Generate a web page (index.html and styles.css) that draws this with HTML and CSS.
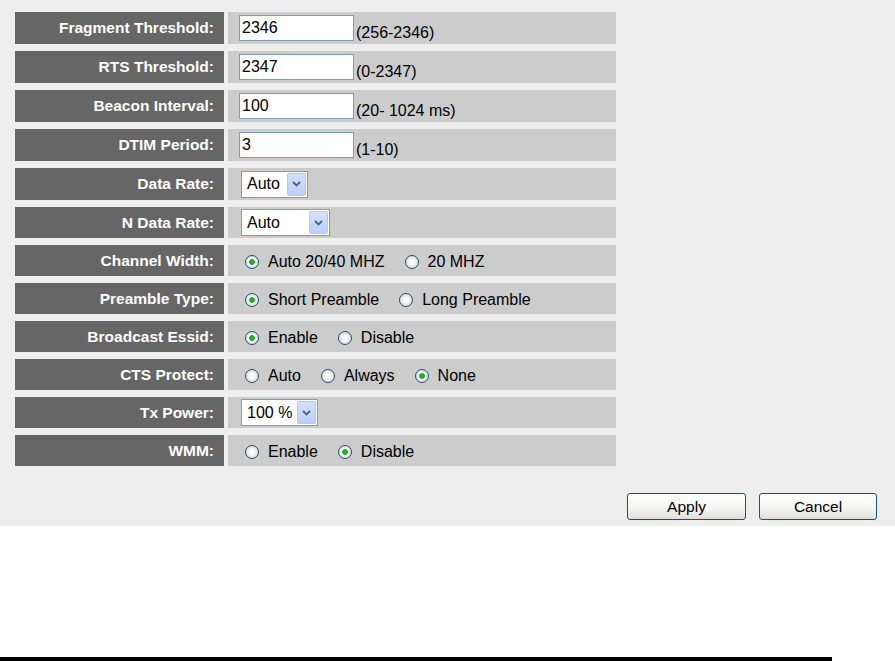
FILE: index.html
```html
<!DOCTYPE html>
<html lang="en">
<head>
    <meta charset="UTF-8">
    <title>Advanced Wireless Settings</title>
    <link rel="stylesheet" href="styles.css">
</head>
<body>
    <div class="page">
        <div class="settings">
            <div class="row tall">
                <div class="label">Fragment Threshold:</div>
                <div class="value"><input class="text-input" type="text" value="2346"><span class="hint">(256-2346)</span></div>
            </div>
            <div class="row tall">
                <div class="label">RTS Threshold:</div>
                <div class="value"><input class="text-input" type="text" value="2347"><span class="hint">(0-2347)</span></div>
            </div>
            <div class="row tall">
                <div class="label">Beacon Interval:</div>
                <div class="value"><input class="text-input" type="text" value="100"><span class="hint">(20- 1024 ms)</span></div>
            </div>
            <div class="row tall">
                <div class="label">DTIM Period:</div>
                <div class="value"><input class="text-input" type="text" value="3"><span class="hint">(1-10)</span></div>
            </div>
            <div class="row tall">
                <div class="label">Data Rate:</div>
                <div class="value">
                    <div class="select select-rate"><span class="select-text">Auto</span><span class="select-btn"><svg width="9" height="6" viewBox="0 0 9 6"><path d="M1 1 L4.5 4.5 L8 1" fill="none" stroke="#4d6185" stroke-width="1.8"/></svg></span></div>
                </div>
            </div>
            <div class="row">
                <div class="label">N Data Rate:</div>
                <div class="value">
                    <div class="select select-nrate"><span class="select-text">Auto</span><span class="select-btn"><svg width="9" height="6" viewBox="0 0 9 6"><path d="M1 1 L4.5 4.5 L8 1" fill="none" stroke="#4d6185" stroke-width="1.8"/></svg></span></div>
                </div>
            </div>
            <div class="row">
                <div class="label">Channel Width:</div>
                <div class="value">
                    <label class="opt"><input class="radio" type="radio" name="cw" checked>Auto 20/40 MHZ</label>
                    <label class="opt"><input class="radio" type="radio" name="cw">20 MHZ</label>
                </div>
            </div>
            <div class="row">
                <div class="label">Preamble Type:</div>
                <div class="value">
                    <label class="opt"><input class="radio" type="radio" name="pt" checked>Short Preamble</label>
                    <label class="opt"><input class="radio" type="radio" name="pt">Long Preamble</label>
                </div>
            </div>
            <div class="row">
                <div class="label">Broadcast Essid:</div>
                <div class="value">
                    <label class="opt"><input class="radio" type="radio" name="be" checked>Enable</label>
                    <label class="opt"><input class="radio" type="radio" name="be">Disable</label>
                </div>
            </div>
            <div class="row">
                <div class="label">CTS Protect:</div>
                <div class="value">
                    <label class="opt"><input class="radio" type="radio" name="cts">Auto</label>
                    <label class="opt"><input class="radio" type="radio" name="cts">Always</label>
                    <label class="opt"><input class="radio" type="radio" name="cts" checked>None</label>
                </div>
            </div>
            <div class="row">
                <div class="label">Tx Power:</div>
                <div class="value">
                    <div class="select select-power"><span class="select-text">100 %</span><span class="select-btn"><svg width="9" height="6" viewBox="0 0 9 6"><path d="M1 1 L4.5 4.5 L8 1" fill="none" stroke="#4d6185" stroke-width="1.8"/></svg></span></div>
                </div>
            </div>
            <div class="row">
                <div class="label">WMM:</div>
                <div class="value">
                    <label class="opt"><input class="radio" type="radio" name="wmm">Enable</label>
                    <label class="opt"><input class="radio" type="radio" name="wmm" checked>Disable</label>
                </div>
            </div>
        </div>
        <div class="actions">
            <button class="btn btn-apply">Apply</button>
            <button class="btn btn-cancel">Cancel</button>
        </div>
    </div>
    <div class="rule"></div>
</body>
</html>
```

FILE: styles.css
```css
body {
    margin: 0;
    background-color: white;
    font-family: "Liberation Sans", Arial, sans-serif;
    font-size: 16px;
    color: #000;
}
.page {
    box-sizing: border-box;
    height: 526px;
    padding: 12px 18px 0 15px;
    background-color: #eeeeee;
}
.settings {
    display: flex;
    flex-direction: column;
    gap: 7px;
    width: 601px;
}
.row {
    display: flex;
    gap: 4px;
    height: 31px;
}
.row.tall {
    height: 32px;
}
.label {
    box-sizing: border-box;
    width: 209px;
    padding-right: 10px;
    display: flex;
    align-items: center;
    justify-content: flex-end;
    background-color: #666666;
    color: white;
    font-weight: bold;
    font-size: 15.5px;
}
.value {
    flex: 1;
    display: flex;
    align-items: center;
    padding-left: 11px;
    background-color: #cccccc;
}
.text-input {
    box-sizing: border-box;
    width: 115px;
    height: 26px;
    margin: 0;
    padding: 0 2px;
    border: 1px solid #7f9db9;
    background: white;
    font-family: "Liberation Sans", Arial, sans-serif;
    font-size: 16px;
    color: #000;
    outline: none;
}
.hint {
    margin: 9px 0 0 2px;
}
.select {
    box-sizing: border-box;
    display: flex;
    align-items: stretch;
    height: 27px;
    margin-left: 2px;
    border: 1px solid #7f9db9;
    background: white;
}
.select-rate { width: 67px; }
.select-nrate { width: 89px; }
.select-power { width: 77px; }
.select-text {
    flex: 1;
    display: flex;
    align-items: center;
    padding-left: 5px;
}
.select-btn {
    width: 17px;
    margin: 1px;
    display: flex;
    align-items: center;
    justify-content: center;
    border: 1px solid #b6c9f4;
    border-radius: 2px;
    background: linear-gradient(#d4e1fc, #bccff8);
}
.opt {
    display: flex;
    align-items: center;
    gap: 9px;
    margin-right: 20px;
    margin-top: 2px;
}
.opt:first-child {
    margin-left: 6px;
}
.radio {
    appearance: none;
    box-sizing: border-box;
    width: 14px;
    height: 14px;
    margin: 0;
    border: 1px solid #1c5180;
    border-radius: 50%;
    background: radial-gradient(circle, #ffffff 0, #f4f4f0 3px, #d6d6cf 7px);
}
.radio:checked {
    background: radial-gradient(circle, #2fb82f 0, #21a121 2.5px, #ffffff 3.2px, #f0f0eb 4px, #d6d6cf 7px);
}
.actions {
    display: flex;
    justify-content: flex-end;
    gap: 13px;
    margin-top: 27px;
}
.btn {
    box-sizing: border-box;
    width: 119px;
    height: 27px;
    padding: 0;
    border: 1px solid #1f4e7e;
    border-radius: 3px;
    background: linear-gradient(#ffffff, #f4f4f0 60%, #e0ded6);
    font-family: "Liberation Sans", Arial, sans-serif;
    font-size: 15.5px;
    color: #000;
}
.btn-cancel {
    width: 118px;
}
.rule {
    width: 832px;
    height: 4px;
    margin-top: 131px;
    background-color: #000;
}
```
